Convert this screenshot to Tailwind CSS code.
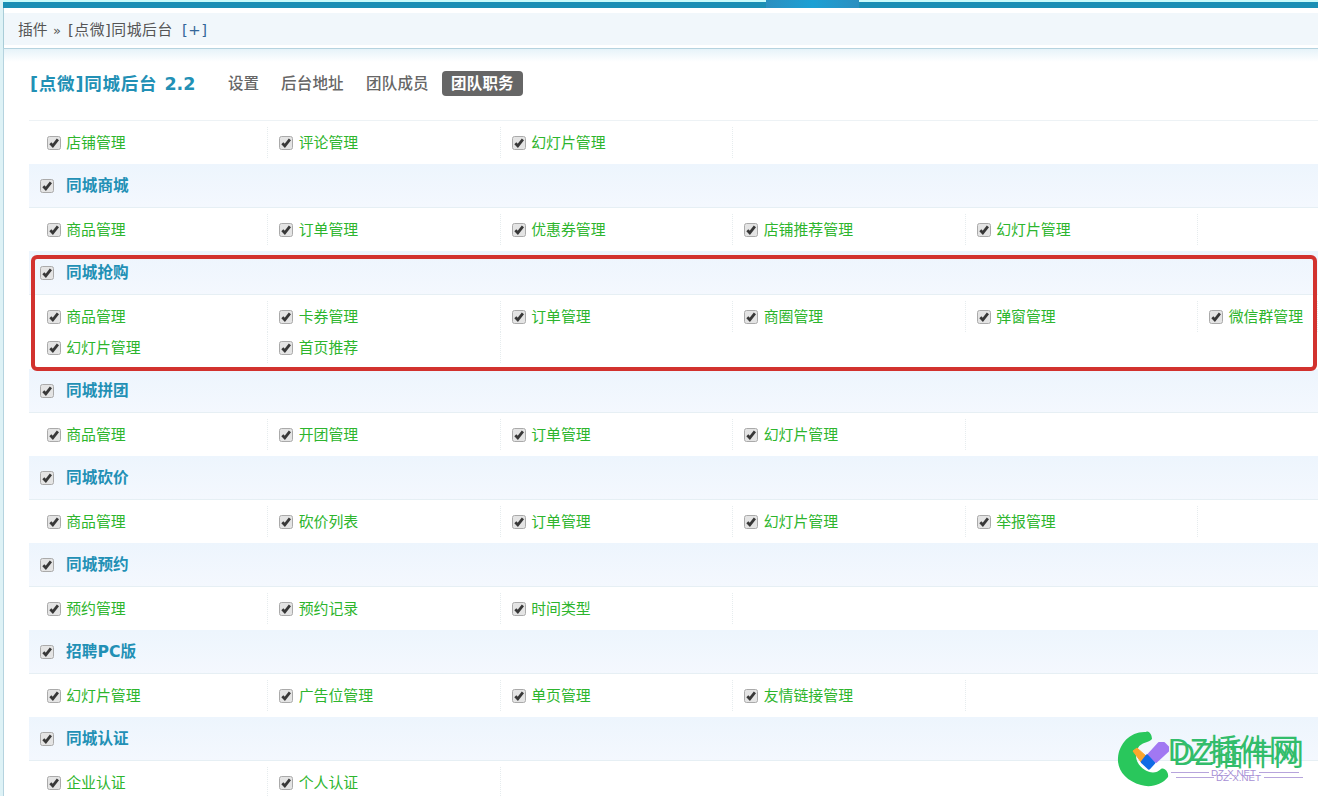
<!DOCTYPE html>
<html lang="zh-CN">
<head>
  <meta charset="UTF-8" />
  <meta name="viewport" content="width=device-width, initial-scale=1" />
  <title>[点微]同城后台</title>
  <script src="https://cdn.jsdelivr.net/npm/@tailwindcss/browser@4"></script>
</head>
<body class="h-[796px] overflow-hidden bg-[#def2f6] pl-[3px] font-['DejaVu_Sans','Noto_Sans_CJK_SC',sans-serif] text-[#555]">
  <!-- Top bar -->
  <div class="h-2 bg-[#c9fbfb] pt-[2px]">
    <div class="h-1.5 bg-[#1a8fb5]">
      <div class="relative -top-[2px] ml-[763px] h-2 w-[93px] bg-linear-to-r from-[#2a8fc0] via-[#1ba0d4] to-[#2a8fc0]"></div>
    </div>
  </div>

  <!-- Breadcrumb -->
  <nav class="h-10 border-l border-[#a9cdd8] bg-white pt-[5px] pb-[3px]">
    <div class="flex h-8 items-center bg-[#f1f7fb] pt-[3px] pl-[14px] text-[14.8px] whitespace-pre">
      <span class="w-[35px]">插件</span>
      <span class="w-[15px] text-[13px]">»</span>
      <span class="w-[114px] tracking-[0.55px]">[点微]同城后台</span>
      <a href="#" class="tracking-[0.5px] text-[#336699]">[+]</a>
    </div>
  </nav>

  <main class="h-[748px] border-t border-l border-[#b5d3df] bg-white">
    <div class="h-[71px] bg-linear-to-b from-[#e6f3f9] to-white to-[13px]">
      <div class="flex h-[70px] items-center pl-[26px]">
        <h1 class="w-[198px] text-[17.5px] font-bold whitespace-nowrap text-[#2290b5]"><span class="tracking-[0.8px]">[点微]同城后台</span><span class="ml-[7px]">2.2</span></h1>
        <ul class="flex items-center text-[15.5px] leading-[25px] font-medium whitespace-nowrap text-[#666]">
          <li class="w-[53px]">设置</li>
          <li class="w-[85px] tracking-[0.2px]">后台地址</li>
          <li class="w-[76px] tracking-[0.2px]">团队成员</li>
          <li class="relative -top-px h-[25px] rounded bg-[#666] px-[9px] pt-px font-bold text-white tracking-[0.2px]">团队职务</li>
        </ul>
      </div>
    </div>
    <div id="perms" class="ml-[25px] border-t border-[#edf2f5]"></div>
  </main>

  <!-- Watermark -->
  <svg class="absolute top-[726px] left-[1112px]" width="206" height="64" viewBox="0 0 206 64">
    <path d="M34 6 C37 4 40 9 40 13 C37 17 29 16 26 22 C22 30 24 38 33 44 C38 47 44 48 49 43 C53 41 57 47 56 51 C50 59 38 62 29 59 C14 55 5 44 6 32 C7 17 19 5 34 6 Z" fill="#29c75c" />
    <path d="M21 25 L25 22 L34 30 L29 36 Z" fill="#fca62c" stroke="#fca62c" stroke-width="1" stroke-linejoin="round" />
    <path d="M36 29 L47 17 L52 17 L56 21 L56 25 L44 36 Z" fill="#a178f2" stroke="#a178f2" stroke-width="2" stroke-linejoin="round" />
    <path d="M30 36 L35 29.5 L42 37 L37 42.5 Z" fill="#126be5" stroke="#126be5" stroke-width="2.5" stroke-linejoin="round" />
    <g fill="#32bd6b" font-family="Liberation Sans, Noto Sans CJK SC, sans-serif" font-size="31">
      <text x="56" y="35" textLength="131" lengthAdjust="spacingAndGlyphs">DZ插件网</text>
      <text x="61" y="39" textLength="131" lengthAdjust="spacingAndGlyphs">DZ插件网</text>
    </g>
    <g fill="#a78fd5" font-family="Liberation Sans, sans-serif" font-size="9">
      <text x="99" y="50" textLength="45" lengthAdjust="spacingAndGlyphs">DZ-X.NET</text>
      <text x="104" y="55" textLength="45" lengthAdjust="spacingAndGlyphs">DZ-X.NET</text>
    </g>
    <path d="M59 46.5H97M147 46.5H187M64 51.5H102M152 51.5H191" stroke="#b7a4dc" />
  </svg>

  <script>
    const groups = [
      { items: ['店铺管理', '评论管理', '幻灯片管理'] },
      { title: '同城商城', items: ['商品管理', '订单管理', '优惠券管理', '店铺推荐管理', '幻灯片管理'] },
      { title: '同城抢购', marked: true, items: ['商品管理', '卡券管理', '订单管理', '商圈管理', '弹窗管理', '微信群管理', '幻灯片管理', '首页推荐'] },
      { title: '同城拼团', items: ['商品管理', '开团管理', '订单管理', '幻灯片管理'] },
      { title: '同城砍价', items: ['商品管理', '砍价列表', '订单管理', '幻灯片管理', '举报管理'] },
      { title: '同城预约', items: ['预约管理', '预约记录', '时间类型'] },
      { title: '招聘PC版', items: ['幻灯片管理', '广告位管理', '单页管理', '友情链接管理'] },
      { title: '同城认证', items: ['企业认证', '个人认证'] },
    ];

    const checkbox = `
      <svg class="mt-px size-[14px] shrink-0" viewBox="0 0 14 14">
        <rect x=".5" y=".5" width="13" height="13" rx="2" fill="#e4e4e4" stroke="#aaa" />
        <path d="M3.3 7.3 L5.8 9.8 L10.9 3.4" fill="none" stroke="#383838" stroke-width="2.8" />
      </svg>`;

    const cell = text => `
      <li class="flex h-[31px] items-center border-r border-dotted border-[#e6ecee] pl-[11px]">
        ${checkbox}<span class="ml-[5.5px] pt-px text-[14.9px] whitespace-nowrap text-[#2db52d]">${text}</span>
      </li>`;

    document.getElementById('perms').innerHTML = groups.map(g => `
      <section class="relative">
        ${g.title ? `
        <h2 class="flex h-[44px] items-center border-b border-[#e6eff4] bg-linear-to-b from-[#edf5fd] to-[#f4f8fe] pl-[11px]">
          ${checkbox}<span class="ml-[12px] pt-[2px] text-[15.6px] font-bold tracking-[0.1px] text-[#2290b5]">${g.title}</span>
        </h2>` : ''}
        <ul class="grid grid-cols-[repeat(5,232.5px)_1fr] py-[6px] pl-[6.7px]">${g.items.map(cell).join('')}</ul>
        ${g.marked ? '<div class="absolute top-[4px] -bottom-[2px] left-[2px] z-10 w-[1286px] rounded-md border-4 border-[#d2322e]"></div>' : ''}
      </section>`).join('');
  </script>
</body>
</html>
